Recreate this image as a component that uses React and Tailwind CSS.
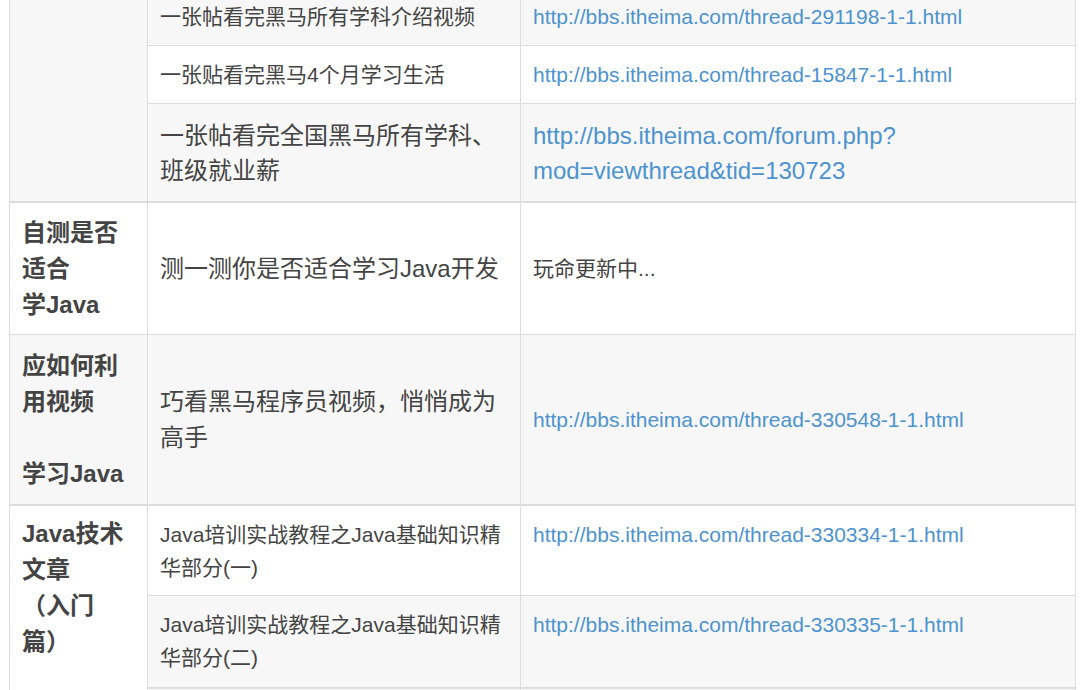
import React from "react";

const FONT = { fontFamily: '"Liberation Sans", "Noto Sans CJK SC", sans-serif' };

const rows = [
  {
    title: "一张帖看完黑马所有学科介绍视频",
    link: "http://bbs.itheima.com/thread-291198-1-1.html",
    gray: true,
  },
  {
    title: "一张贴看完黑马4个月学习生活",
    link: "http://bbs.itheima.com/thread-15847-1-1.html",
    gray: false,
  },
];

const cell = "border-r border-[#dddddd] px-3 flex flex-col";

const Link = ({ children, className = "" }) => (
  <a href="#" className={"text-[#4d93cf] " + className}>
    {children}
  </a>
);

const Heading = ({ lines, className = "" }) => (
  <div className={"text-[24px] leading-[36px] font-bold text-[#444444] " + className}>
    {lines.map((line, i) => (
      <div key={i} className="h-[36px]">
        {line}
      </div>
    ))}
  </div>
);

const App = () => {
  return (
    <div className="w-[1084px] h-[690px] overflow-hidden bg-white" style={FONT}>
      <div className="ml-[9px] -mt-[13px] grid grid-cols-[139px_373px_555px] grid-rows-[59px_58px_99px_132px_171px_90px_93px_100px] text-[#444444]">
        {/* group 1 */}
        <div className={cell + " row-span-3 border-l border-b-2 bg-[#f7f7f7]"} />
        {rows.map((r) => (
          <React.Fragment key={r.link}>
            <div
              className={
                cell +
                " border-b justify-center text-[21px] leading-[33px] " +
                (r.gray ? "bg-[#f7f7f7]" : "bg-white")
              }
            >
              {r.title}
            </div>
            <div
              className={
                cell +
                " border-b justify-center text-[21px] leading-[33px] " +
                (r.gray ? "bg-[#f7f7f7]" : "bg-white")
              }
            >
              <Link>{r.link}</Link>
            </div>
          </React.Fragment>
        ))}
        <div className={cell + " border-b-2 justify-center text-[24px] leading-[35px] bg-[#f7f7f7]"}>
          一张帖看完全国黑马所有学科、班级就业薪
        </div>
        <div className={cell + " border-b-2 justify-center text-[24px] leading-[35px] bg-[#f7f7f7]"}>
          <Link>
            http://bbs.itheima.com/forum.php?
            <br />
            mod=viewthread&amp;tid=130723
          </Link>
        </div>

        {/* group 2 */}
        <div className={cell + " border-l border-b justify-center bg-white"}>
          <Heading lines={["自测是否", "适合", "学Java"]} />
        </div>
        <div className={cell + " border-b justify-center text-[24px] leading-[36px] bg-white"}>
          测一测你是否适合学习Java开发
        </div>
        <div className={cell + " border-b justify-center text-[21px] leading-[33px] bg-white"}>
          玩命更新中...
        </div>

        {/* group 3 */}
        <div className={cell + " border-l border-b-2 justify-center bg-[#f7f7f7]"}>
          <Heading lines={["应如何利", "用视频", "", "学习Java"]} />
        </div>
        <div className={cell + " border-b-2 justify-center text-[24px] leading-[36px] bg-[#f7f7f7]"}>
          巧看黑马程序员视频，悄悄成为高手
        </div>
        <div className={cell + " border-b-2 justify-center text-[21px] leading-[33px] bg-[#f7f7f7]"}>
          <Link>http://bbs.itheima.com/thread-330548-1-1.html</Link>
        </div>

        {/* group 4 */}
        <div className={cell + " row-span-3 border-l justify-start pt-[10px] bg-white"}>
          <Heading lines={["Java技术", "文章", "（入门", "篇）"]} />
        </div>
        <div className={cell + " border-b justify-start pt-3 text-[21px] leading-[33px] bg-white"}>
          Java培训实战教程之Java基础知识精华部分(一)
        </div>
        <div className={cell + " border-b justify-start pt-3 text-[21px] leading-[33px] bg-white"}>
          <Link>http://bbs.itheima.com/thread-330334-1-1.html</Link>
        </div>
        <div className={cell + " border-b-2 justify-start pt-3 text-[21px] leading-[33px] bg-[#f7f7f7]"}>
          Java培训实战教程之Java基础知识精华部分(二)
        </div>
        <div className={cell + " border-b-2 justify-start pt-3 text-[21px] leading-[33px] bg-[#f7f7f7]"}>
          <Link>http://bbs.itheima.com/thread-330335-1-1.html</Link>
        </div>
        <div className={cell + " border-b bg-white"} />
        <div className={cell + " border-b bg-white"} />
      </div>
    </div>
  );
};

export default App;
